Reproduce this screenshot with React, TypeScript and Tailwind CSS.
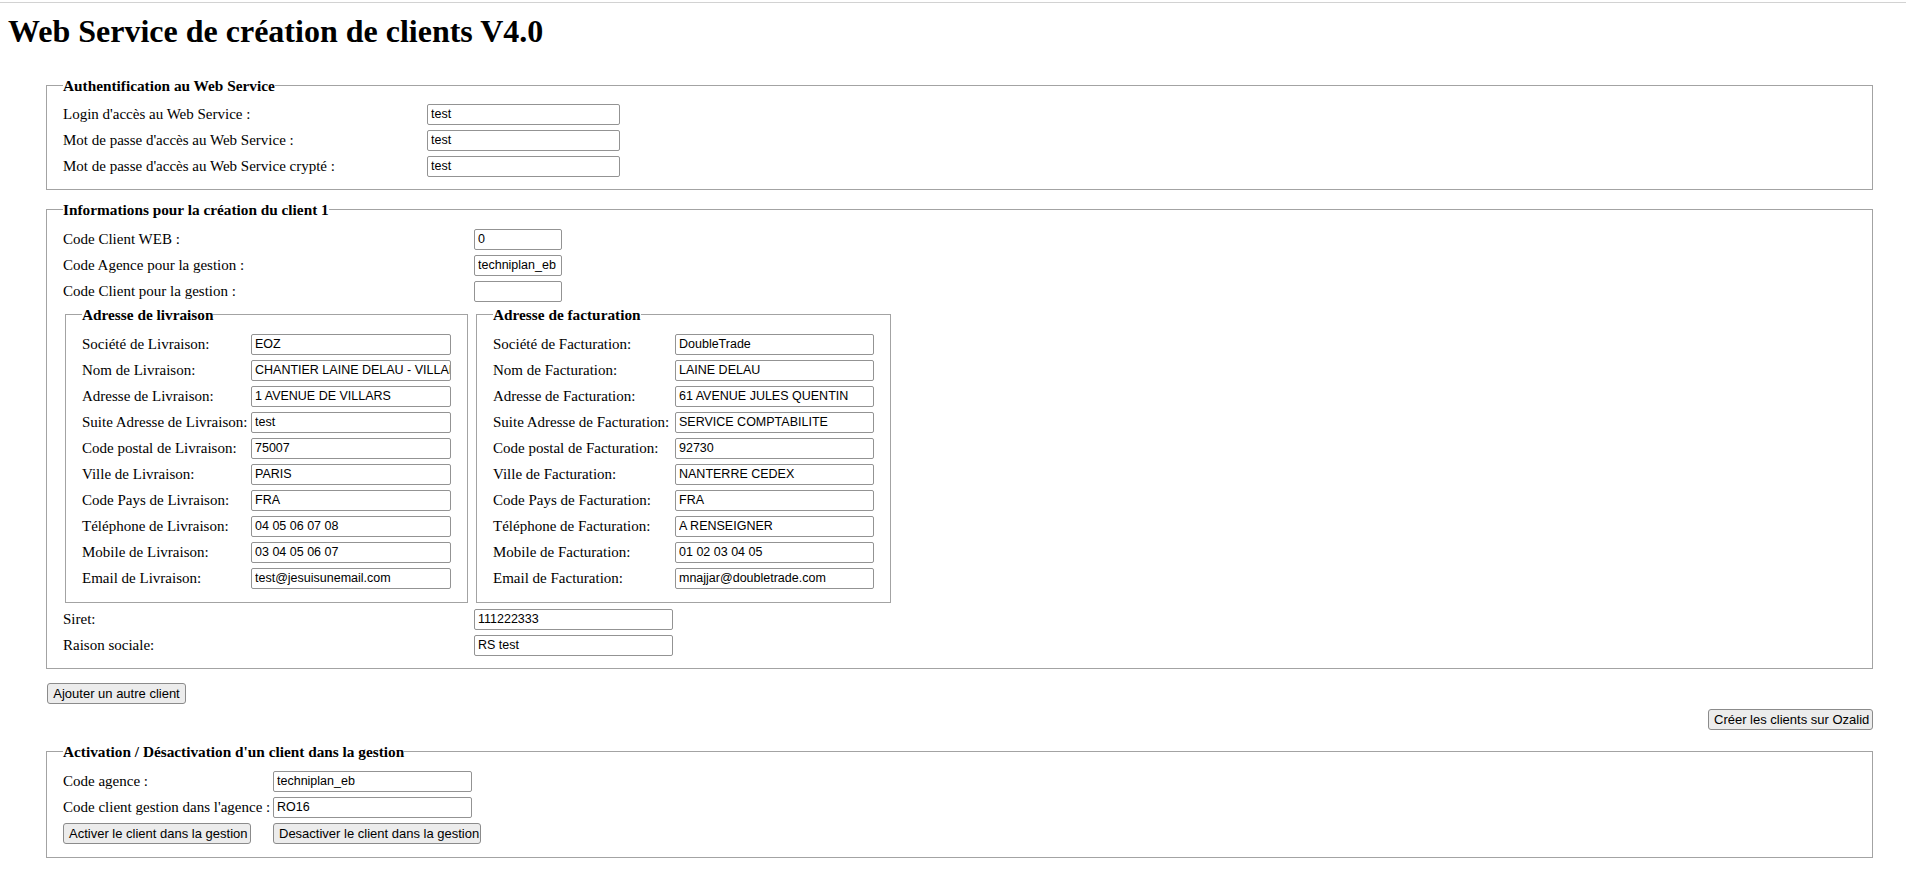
import type React from 'react';

interface FieldProps {
  label: string;
  value?: string;
  labelClass: string;
  inputClass: string;
}

const TextInput: React.FC<{ value?: string; className: string }> = ({ value = '', className }) => (
  <input
    type="text"
    defaultValue={value}
    className={`h-[21px] rounded-[2px] border border-[#939393] bg-white pl-[3px] font-['Liberation_Sans',Arial,sans-serif] text-[12.5px] text-black outline-none ${className}`}
  />
);

const Field: React.FC<FieldProps> = ({ label, value, labelClass, inputClass }) => (
  <div className="flex h-[26px] items-center">
    <span className={`shrink-0 whitespace-nowrap text-[15px] ${labelClass}`}>{label}</span>
    <TextInput value={value} className={inputClass} />
  </div>
);

const Button: React.FC<{ children: React.ReactNode; className?: string }> = ({ children, className = '' }) => (
  <button
    type="button"
    className={`h-[21px] rounded-[3px] border border-[#8b8b8b] bg-[#ececec] px-[5px] text-center font-['Liberation_Sans',Arial,sans-serif] text-[13px] leading-[19px] whitespace-nowrap text-black ${className}`}
  >
    {children}
  </button>
);

const Legend: React.FC<{ children: React.ReactNode }> = ({ children }) => (
  <legend className="text-[15.3px] leading-[17px] font-bold">{children}</legend>
);

const livraison: [string, string][] = [
  ['Société de Livraison:', 'EOZ'],
  ['Nom de Livraison:', 'CHANTIER LAINE DELAU - VILLARS'],
  ['Adresse de Livraison:', '1 AVENUE DE VILLARS'],
  ['Suite Adresse de Livraison:', 'test'],
  ['Code postal de Livraison:', '75007'],
  ['Ville de Livraison:', 'PARIS'],
  ['Code Pays de Livraison:', 'FRA'],
  ['Téléphone de Livraison:', '04 05 06 07 08'],
  ['Mobile de Livraison:', '03 04 05 06 07'],
  ['Email de Livraison:', 'test@jesuisunemail.com'],
];

const facturation: [string, string][] = [
  ['Société de Facturation:', 'DoubleTrade'],
  ['Nom de Facturation:', 'LAINE DELAU'],
  ['Adresse de Facturation:', '61 AVENUE JULES QUENTIN'],
  ['Suite Adresse de Facturation:', 'SERVICE COMPTABILITE'],
  ['Code postal de Facturation:', '92730'],
  ['Ville de Facturation:', 'NANTERRE CEDEX'],
  ['Code Pays de Facturation:', 'FRA'],
  ['Téléphone de Facturation:', 'A RENSEIGNER'],
  ['Mobile de Facturation:', '01 02 03 04 05'],
  ['Email de Facturation:', 'mnajjar@doubletrade.com'],
];

export default function App() {
  return (
    <div className="min-h-[886px] bg-white font-['Liberation_Serif','Times_New_Roman',serif] text-black">
      <div className="h-[2px]" />
      <div className="h-px bg-[#d2d2d2]" />
      <h1 className="mt-[10px] ml-[8px] text-[32px] leading-[36px] font-bold">Web Service de création de clients V4.0</h1>

      <div className="mt-[28px] ml-[46px] flex w-[1827px] flex-col">
        <fieldset className="border border-[#a3a3a3] pt-[7px] pb-[10px] pl-4">
          <Legend>Authentification au Web Service</Legend>
          <Field label="Login d'accès au Web Service :" value="test" labelClass="w-[364px]" inputClass="w-[193px]" />
          <Field label="Mot de passe d'accès au Web Service :" value="test" labelClass="w-[364px]" inputClass="w-[193px]" />
          <Field label="Mot de passe d'accès au Web Service crypté :" value="test" labelClass="w-[364px]" inputClass="w-[193px]" />
        </fieldset>

        <fieldset className="mt-[11px] border border-[#a3a3a3] pt-2 pb-[10px] pl-4">
          <Legend>Informations pour la création du client 1</Legend>
          <Field label="Code Client WEB :" value="0" labelClass="w-[411px]" inputClass="w-[88px]" />
          <Field label="Code Agence pour la gestion :" value="techniplan_eb" labelClass="w-[411px]" inputClass="w-[88px]" />
          <Field label="Code Client pour la gestion :" labelClass="w-[411px]" inputClass="w-[88px]" />

          <div className="mt-[2px] mb-[3px] flex">
            <fieldset className="ml-[2px] w-[403px] border border-[#a3a3a3] pt-2 pb-[11px] pl-4">
              <Legend>Adresse de livraison</Legend>
              {livraison.map(([label, value]) => (
                <Field key={label} label={label} value={value} labelClass="w-[169px]" inputClass="w-[200px]" />
              ))}
            </fieldset>
            <fieldset className="ml-[8px] w-[415px] border border-[#a3a3a3] pt-2 pb-[11px] pl-4">
              <Legend>Adresse de facturation</Legend>
              {facturation.map(([label, value]) => (
                <Field key={label} label={label} value={value} labelClass="w-[182px]" inputClass="w-[199px]" />
              ))}
            </fieldset>
          </div>

          <Field label="Siret:" value="111222333" labelClass="w-[411px]" inputClass="w-[199px]" />
          <Field label="Raison sociale:" value="RS test" labelClass="w-[411px]" inputClass="w-[199px]" />
        </fieldset>

        <Button className="mt-[14px] ml-px w-[139px] self-start">Ajouter un autre client</Button>
        <Button className="mt-[5px] w-[165px] self-end">Créer les clients sur Ozalid</Button>

        <fieldset className="mt-[13px] border border-[#a3a3a3] pt-2 pb-[11px] pl-4">
          <Legend>Activation / Désactivation d'un client dans la gestion</Legend>
          <Field label="Code agence :" value="techniplan_eb" labelClass="w-[210px]" inputClass="w-[199px]" />
          <Field label="Code client gestion dans l'agence :" value="RO16" labelClass="w-[210px]" inputClass="w-[199px]" />
          <div className="flex h-[26px] items-center">
            <div className="w-[210px] shrink-0">
              <Button className="w-[188px]">Activer le client dans la gestion</Button>
            </div>
            <Button className="w-[208px]">Desactiver le client dans la gestion</Button>
          </div>
        </fieldset>
      </div>
    </div>
  );
}
